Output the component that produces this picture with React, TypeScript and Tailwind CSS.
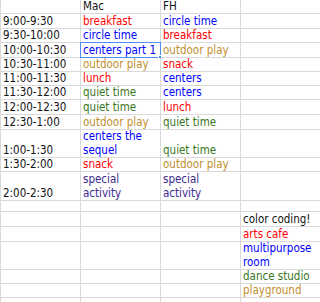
import React from 'react';

type Cell = { t: string; c?: string };

const RED = 'text-[#ff0000]';
const BLUE = 'text-[#0000ff]';
const ORANGE = 'text-[#bf8f30]';
const GREEN = 'text-[#38761d]';
const PURPLE = 'text-[#3d2b8f]';
const INK = 'text-[#111111]';

// each row: height in px (bottom gridline included) and the four cells
const rows: { h: string; cells: Cell[] }[] = [
  { h: 'h-[14px]', cells: [{ t: '' }, { t: 'Mac', c: INK }, { t: 'FH', c: INK }, { t: '' }] },
  { h: 'h-[15px]', cells: [{ t: '9:00-9:30', c: INK }, { t: 'breakfast', c: RED }, { t: 'circle time', c: BLUE }, { t: '' }] },
  { h: 'h-[14px]', cells: [{ t: '9:30-10:00', c: INK }, { t: 'circle time', c: BLUE }, { t: 'breakfast', c: RED }, { t: '' }] },
  { h: 'h-[15px]', cells: [{ t: '10:00-10:30', c: INK }, { t: 'centers part 1', c: BLUE }, { t: 'outdoor play', c: ORANGE }, { t: '' }] },
  { h: 'h-[14px]', cells: [{ t: '10:30-11:00', c: INK }, { t: 'outdoor play', c: ORANGE }, { t: 'snack', c: RED }, { t: '' }] },
  { h: 'h-[14px]', cells: [{ t: '11:00-11:30', c: INK }, { t: 'lunch', c: RED }, { t: 'centers', c: BLUE }, { t: '' }] },
  { h: 'h-[14px]', cells: [{ t: '11:30-12:00', c: INK }, { t: 'quiet time', c: GREEN }, { t: 'centers', c: BLUE }, { t: '' }] },
  { h: 'h-[15px]', cells: [{ t: '12:00-12:30', c: INK }, { t: 'quiet time', c: GREEN }, { t: 'lunch', c: RED }, { t: '' }] },
  { h: 'h-[15px]', cells: [{ t: '12:30-1:00', c: INK }, { t: 'outdoor play', c: ORANGE }, { t: 'quiet time', c: GREEN }, { t: '' }] },
  { h: 'h-[28px]', cells: [{ t: '1:00-1:30', c: INK }, { t: 'centers the sequel', c: BLUE }, { t: 'quiet time', c: GREEN }, { t: '' }] },
  { h: 'h-[14px]', cells: [{ t: '1:30-2:00', c: INK }, { t: 'snack', c: RED }, { t: 'outdoor play', c: ORANGE }, { t: '' }] },
  { h: 'h-[29px]', cells: [{ t: '2:00-2:30', c: INK }, { t: 'special activity', c: PURPLE }, { t: 'special activity', c: PURPLE }, { t: '' }] },
  { h: 'h-[11px]', cells: [{ t: '' }, { t: '' }, { t: '' }, { t: '' }] },
  { h: 'h-[15px]', cells: [{ t: '' }, { t: '' }, { t: '' }, { t: 'color coding!', c: INK }] },
  { h: 'h-[15px]', cells: [{ t: '' }, { t: '' }, { t: '' }, { t: 'arts cafe', c: RED }] },
  { h: 'h-[28px]', cells: [{ t: '' }, { t: '' }, { t: '' }, { t: 'multipurpose room', c: BLUE }] },
  { h: 'h-[14px]', cells: [{ t: '' }, { t: '' }, { t: '' }, { t: 'dance studio', c: GREEN }] },
  { h: 'h-[14px]', cells: [{ t: '' }, { t: '' }, { t: '' }, { t: 'playground', c: ORANGE }] },
  { h: 'h-[14px]', cells: [{ t: '' }, { t: '' }, { t: '' }, { t: '' }] },
];

const colClass = [
  'w-[81px] border-l border-r',
  'w-[80px] border-r',
  'w-[80px] border-r',
  'w-[80px]',
];

export default function App() {
  return (
    <div
      className="w-[320px] h-[302px] overflow-hidden bg-white text-[11.5px] leading-[14px] font-stretch-condensed"
      style={{ fontFamily: '"DejaVu Sans Condensed", "DejaVu Sans", sans-serif' }}
    >
      {rows.map((row, r) => (
        <div key={r} className={`flex ${row.h}`}>
          {row.cells.map((cell, i) => (
            <div
              key={i}
              className={`relative shrink-0 flex items-end border-b border-[#d9d9d9] pl-[2px] ${colClass[i]} ${cell.c ?? ''}`}
            >
              <span className="whitespace-normal">{cell.t}</span>
              {r === 3 && i === 1 && (
                <div className="absolute -left-px -top-px -right-px -bottom-px border border-[#4d8ef7]">
                  <div className="absolute -right-[2px] -bottom-[2px] w-[4px] h-[4px] bg-[#4d8ef7] border border-white" />
                </div>
              )}
            </div>
          ))}
        </div>
      ))}
    </div>
  );
}
